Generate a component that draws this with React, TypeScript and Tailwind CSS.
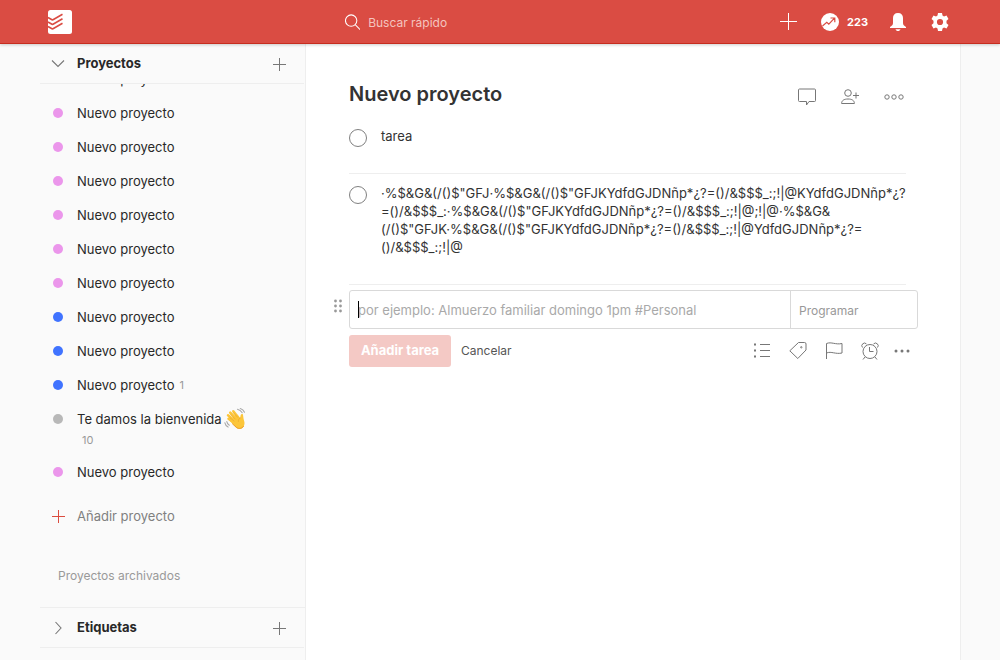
import React from "react";

type Project = { color: string; name: string; count?: string; wave?: boolean };

const pink: Project = { color: "bg-[#eb96eb]", name: "Nuevo proyecto" };
const blue: Project = { color: "bg-[#4073ff]", name: "Nuevo proyecto" };

const projects: Project[] = [
  pink,
  pink,
  pink,
  pink,
  pink,
  pink,
  pink,
  blue,
  blue,
  { ...blue, count: "1" },
  { color: "bg-[#b8b8b8]", name: "Te damos la bienvenida", count: "10", wave: true },
  pink,
];

function Plus() {
  return (
    <svg width="13" height="13" viewBox="0 0 13 13" aria-hidden="true">
      <path d="M6 0h1v6h6v1H7v6H6V7H0V6h6z" fill="currentColor" />
    </svg>
  );
}

function Wave() {
  return (
    <svg width="22" height="22" viewBox="0 0 22 22" role="img" aria-label="Mano saludando">
      <g fill="none" stroke="#a9a9a9" strokeWidth="1.1" strokeLinecap="round">
        <path d="M13.5 1.2c2 .5 3.800 1.800 4.700 3.600M16.300.6c1.900.6 3.300 1.800 4.200 3.600M.8 14.700c.4 2 1.500 3.500 3.300 4.400M2.800 13.600c.3 1.600 1.200 2.800 2.500 3.600" />
      </g>
      <g fill="none" stroke="#fcc63a" strokeWidth="2.500" strokeLinecap="round">
        <path d="M11.500 10 6.200 4.600M13.500 8.500 9.300 3.200M9.800 12 4 7.300M9.500 14.500 4.500 10.800" />
      </g>
      <path
        d="M7.500 14.600l-2-2L12.500 6l4 4c-.3-2 .1-3.400 1.300-4 .9-.3 1.200.3 1.300 1.400l.5 3.600c.6 2.300 1.600 4.300.3 6.900-1.400 2.900-4.700 3.700-7.400 2z"
        fill="#fcc63a"
      />
      <path d="M8.200 15.600l4.300 3.900c2.500 1.700 5.600 1.100 7.200-1.500" fill="none" stroke="#ed9b26" strokeWidth="1" />
      <path d="M6.500 6.300l5 5M9.300 4.600l4.700 5M5.500 9.300l4.800 4M17 9.500c-2 .8-2.800 2.200-2.600 4.300" fill="none" stroke="#e8a02c" strokeWidth=".6" />
    </svg>
  );
}

function SectionHeader({ title, open }: { title: string; open: boolean }) {
  return (
    <div className="mr-px flex h-10 items-center border-b border-[#eeeeee]">
      <button type="button" aria-expanded={open} className="flex flex-1 items-center text-[13px] font-bold text-[#282828]">
        <span className="mr-px flex w-9 justify-center">
          <svg width="14" height="14" viewBox="0 0 14 14" fill="none" stroke="#777" strokeWidth="1.100" aria-hidden="true">
            {open ? <path d="M1 3.500l6 6 6-6" /> : <path d="M4.500 1l5.500 6-5.500 6" />}
          </svg>
        </span>
        <span className="pt-px">{title}</span>
      </button>
      <button type="button" aria-label={"Añadir a " + title} className="mr-[18px] pt-px text-[#777]">
        <Plus />
      </button>
    </div>
  );
}

function TopBar() {
  return (
    <header className="relative z-10 border-b border-[#c62d1f] bg-[#da4c43] shadow-[0_1px_3px_rgba(0,0,0,0.2)]">
      <div className="mx-auto flex h-[43px] max-w-[920px] items-center pr-[11px] pl-2 text-white">
        <a href="#inicio" aria-label="Inicio">
          <svg width="24" height="24" viewBox="0 0 24 24" aria-hidden="true">
            <rect width="24" height="24" rx="2.500" fill="#fff" />
            <g fill="none" stroke="#da4c43" strokeWidth="1.600" strokeLinejoin="round">
              <path d="M0 7.500l4 2.200c.4.200.7.200 1 0l9.500-5.500M0 12l4 2.200c.4.200.7.200 1 0l9.500-5.500M0 16.500l4 2.200c.4.200.7.200 1 0l9.500-5.500" />
            </g>
          </svg>
        </a>
        <label className="ml-[273px] flex flex-1 items-center gap-2">
          <svg width="16" height="16" viewBox="0 0 16 16" fill="none" stroke="#fff" strokeWidth="1.100" aria-hidden="true">
            <circle cx="6.500" cy="6.500" r="6" />
            <path d="M11 11l5 5" />
          </svg>
          <input
            type="search"
            aria-label="Buscar rápido"
            placeholder="Buscar rápido"
            className="w-full min-w-0 bg-transparent pt-0.5 text-xs outline-none placeholder:text-[#f4c4bf]"
          />
        </label>
        <nav className="flex items-center">
          <button type="button" aria-label="Añadir tarea rápida">
            <svg width="17" height="17" viewBox="0 0 17 17" fill="none" stroke="#fff" aria-hidden="true">
              <path d="M8.500 0v17M0 8.500h17" />
            </svg>
          </button>
          <button type="button" className="ml-6 flex items-center gap-2 text-[11px] font-bold">
            <svg width="18" height="18" viewBox="0 0 18 18" aria-hidden="true">
              <circle cx="9" cy="9" r="9" fill="#fff" />
              <path d="M1.500 13l4.300-3.600 2 1.800 5.700-6M9.500 5h4.300v4.300" fill="none" stroke="#da4c43" strokeWidth="1.200" />
            </svg>
            <span className="pt-px">223</span>
          </button>
          <button type="button" aria-label="Notificaciones" className="ml-[22px]">
            <svg width="16" height="18" viewBox="0 0 16 18" fill="#fff" aria-hidden="true">
              <path d="M8 0c3.300 0 5 2.100 5 5v5c0 1.800 1 2.800 3 4v1H0v-1c2-1.200 3-2.200 3-4V5c0-2.900 1.700-5 5-5zM5.500 16.200h5c-.4 1.100-1.300 1.800-2.500 1.800s-2.100-.7-2.500-1.800z" />
            </svg>
          </button>
          <button type="button" aria-label="Ajustes" className="ml-[25px]">
            <svg width="18" height="18" viewBox="0 0 18 18" aria-hidden="true">
              <path
                d="M7 0h4l.5 2.600 1.500.9 2.500-.9 2 3.400-2 1.800v2.400l2 1.800-2 3.400-2.500-.9-1.500.9L11 18H7l-.5-2.600-1.500-.9-2.500.9-2-3.400 2-1.800V7.800l-2-1.800 2-3.400 2.500.9 1.500-.9zM9 5.900a3.100 3.100 0 1 0 0 6.200 3.100 3.100 0 0 0 0-6.200z"
                fill="#fff"
                fillRule="evenodd"
              />
            </svg>
          </button>
        </nav>
      </div>
    </header>
  );
}

function Sidebar() {
  return (
    <aside className="w-[266px] shrink-0 border-r border-[#eeeeee] bg-[#fafafa]">
      <SectionHeader title="Proyectos" open />
      <div className="overflow-hidden">
        <ul className="-mt-[22px] text-[13px] text-[#282828]">
          {projects.map((p, i) => (
            <li key={i} className="flex">
              <span className="mr-px flex h-[34px] w-9 shrink-0 items-center justify-center">
                <span className={"size-[10px] rounded-full " + p.color} />
              </span>
              <a href={"#proyecto-" + i} className="block">
                <span className="flex h-[34px] items-center">
                  <span className="pt-px">{p.name}</span>
                  {p.wave && (
                    <span className="ml-0.5">
                      <Wave />
                    </span>
                  )}
                  {p.count && !p.wave && <span className="ml-[5px] pt-px text-[11px] text-[#999]">{p.count}</span>}
                </span>
                {p.wave && <span className="-mt-1 ml-[5px] block h-[23px] text-[11px] leading-[16px] text-[#999]">{p.count}</span>}
              </a>
            </li>
          ))}
        </ul>
      </div>
      <button type="button" className="mt-[10px] flex h-[34px] items-center text-[13px] text-[#808080]">
        <span className="mr-px flex w-9 justify-center text-[#db4c3f]">
          <Plus />
        </span>
        <span className="pt-px">Añadir proyecto</span>
      </button>
      <a href="#archivados" className="mt-[34px] ml-[18px] block h-10 text-xs leading-[18px] text-[#999]">
        Proyectos archivados
      </a>
      <div className="border-t border-[#eeeeee]">
        <SectionHeader title="Etiquetas" open={false} />
      </div>
    </aside>
  );
}

function Task({ lines }: { lines: string[] }) {
  return (
    <li className="flex gap-[14px] border-b border-[#eeeeee] pt-[10px] pb-7">
      <input
        type="checkbox"
        aria-label={"Completar " + lines[0]}
        className="mt-0.5 -mb-0.5 size-[18px] shrink-0 appearance-none rounded-full border border-[#808080]"
      />
      <p className="text-[13px] leading-[18px] whitespace-nowrap">
        {lines.map((line, i) => (
          <span key={i} className="block">
            {line}
          </span>
        ))}
      </p>
    </li>
  );
}

const tools = [
  {
    label: "Elegir proyecto",
    art: (
      <>
        <path d="M7 2.500h10M7 8.500h10M7 14.500h10" />
        <path d="M1 2.500h2M1 8.500h2M1 14.500h2" strokeWidth="2" />
      </>
    ),
  },
  {
    label: "Añadir etiqueta",
    art: (
      <>
        <path d="M9.500.5h6q1.500 0 1.500 1.500v6L8.800 16.500.8 8.800z" strokeLinejoin="round" />
        <circle cx="12.300" cy="5.300" r=".7" />
      </>
    ),
  },
  { label: "Prioridad", art: <path d="M1.500 17V1.500c5-2 9 1.500 15.500 0V11c-6.500 1.500-10.500-2-15.500 0" /> },
  {
    label: "Recordatorio",
    art: (
      <>
        <circle cx="9" cy="9.500" r="7" />
        <path d="M8.500 5v4.500h4M4 15l-2 2.500M14 15l2 2.500M1.500 5.500a2.500 2.500 0 1 1 4-3.500M16.500 5.500a2.500 2.500 0 1 0-4-3.500" />
      </>
    ),
  },
];

function Editor() {
  return (
    <form className="mt-[5px] -mr-3" onSubmit={(e) => e.preventDefault()}>
      <div className="relative flex h-[39px] rounded-[3px] border border-[#d9d9d9]">
        <svg width="8" height="14" viewBox="0 0 8 14" fill="#999" className="absolute top-2 -left-4" aria-hidden="true">
          {[2, 7, 12].map((y) => (
            <g key={y}>
              <circle cx="1.500" cy={y} r="1.400" />
              <circle cx="6.500" cy={y} r="1.400" />
            </g>
          ))}
        </svg>
        <span className="absolute top-[10px] left-2 h-[17px] w-px bg-black" />
        <input
          aria-label="Nombre de la tarea"
          placeholder="por ejemplo: Almuerzo familiar domingo 1pm #Personal"
          className="min-w-0 flex-1 px-2 pt-0.5 text-[13px] outline-none placeholder:text-[#a9a9a9]"
        />
        <input
          aria-label="Programar"
          placeholder="Programar"
          className="w-[127px] border-l border-[#d9d9d9] px-2 pt-0.5 text-xs outline-none placeholder:text-[#999]"
        />
      </div>
      <div className="mt-[6px] flex h-8 items-center pr-2">
        <button type="submit" className="h-8 w-[102px] rounded-[3px] bg-[#f4c9c5] text-[13px] font-bold text-white">
          Añadir tarea
        </button>
        <button type="button" className="ml-[10px] text-xs text-[#555]">
          Cancelar
        </button>
        <span className="flex-1" />
        <span className="flex items-center gap-[18px]">
          {tools.map((t) => (
            <button key={t.label} type="button" aria-label={t.label}>
              <svg width="18" height="18" viewBox="0 0 18 18" fill="none" stroke="#777" aria-hidden="true">
                {t.art}
              </svg>
            </button>
          ))}
        </span>
        <button type="button" aria-label="Más opciones" className="ml-[15px]">
          <svg width="16" height="4" viewBox="0 0 16 4" fill="#777" aria-hidden="true">
            <circle cx="2" cy="2" r="1.500" />
            <circle cx="8" cy="2" r="1.500" />
            <circle cx="14" cy="2" r="1.500" />
          </svg>
        </button>
      </div>
    </form>
  );
}

const tasks = [
  ["tarea"],
  [
    '·%$&G&(/()$"GFJ·%$&G&(/()$"GFJKYdfdGJDNñp*¿?=()/&$$$_:;!|@KYdfdGJDNñp*¿?',
    '=()/&$$$_:·%$&G&(/()$"GFJKYdfdGJDNñp*¿?=()/&$$$_:;!|@;!|@·%$&G&',
    '(/()$"GFJK·%$&G&(/()$"GFJKYdfdGJDNñp*¿?=()/&$$$_:;!|@YdfdGJDNñp*¿?=',
    "()/&$$$_:;!|@",
  ],
];

export default function App() {
  return (
    <div className="flex min-h-screen flex-col bg-[#fafafa] font-['Inter',sans-serif] text-[#333]">
      <TopBar />
      <div className="mx-auto flex w-full max-w-[922px] flex-1 pl-px">
        <Sidebar />
        <main className="min-w-0 flex-1 border-r border-[#eeeeee] bg-white pt-8 pr-[54px] pl-[43px]">
          <div className="flex h-[41px] items-center justify-between">
            <h1 className="pb-1.5 text-xl font-semibold">Nuevo proyecto</h1>
            <div className="mr-0.5 flex items-center gap-[25px] pt-px">
              <button type="button" aria-label="Comentarios">
                <svg width="18" height="18" viewBox="0 0 18 18" fill="none" stroke="#777" aria-hidden="true">
                  <path d="M1.500 1h15q1 0 1 1v10.500q0 1-1 1H11L8.500 17v-3.500h-7q-1 0-1-1V2q0-1 1-1z" />
                </svg>
              </button>
              <button type="button" aria-label="Compartir">
                <svg width="18" height="16" viewBox="0 0 18 16" fill="none" stroke="#777" aria-hidden="true">
                  <circle cx="7" cy="4" r="3.300" />
                  <path d="M.6 14.500h12.800c0-3-2.400-4.500-6.400-4.500S.6 11.500.6 14.500zM12 6.500h6M15 3.500v6" />
                </svg>
              </button>
              <button type="button" aria-label="Más acciones">
                <svg width="20" height="6" viewBox="0 0 20 6" fill="none" stroke="#777" aria-hidden="true">
                  <circle cx="3" cy="3" r="2.200" />
                  <circle cx="10" cy="3" r="2.200" />
                  <circle cx="17" cy="3" r="2.200" />
                </svg>
              </button>
            </div>
          </div>
          <ul>
            {tasks.map((lines) => (
              <Task key={lines[0]} lines={lines} />
            ))}
          </ul>
          <Editor />
        </main>
      </div>
    </div>
  );
}
